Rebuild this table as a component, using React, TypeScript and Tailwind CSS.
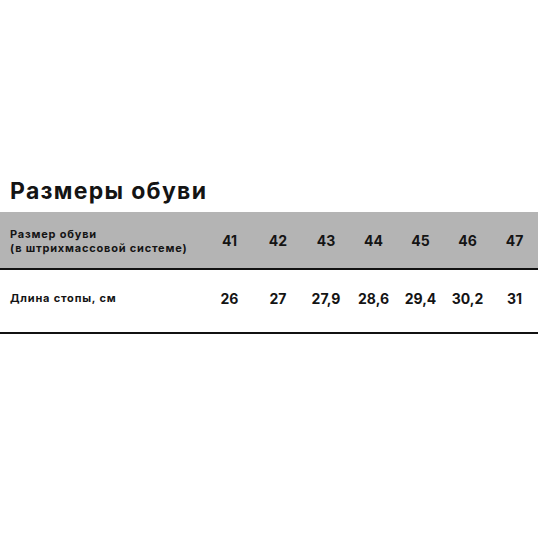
import React from "react";

const sizes = ["41", "42", "43", "44", "45", "46", "47"];
const lengths = ["26", "27", "27,9", "28,6", "29,4", "30,2", "31"];

const grid =
  "grid grid-cols-[205px_49px_48px_48px_47px_47px_47px_47px] items-center";

export default function App() {
  return (
    <div
      className="w-[538px] h-[538px] bg-white text-[#141414] pt-[177px]"
      style={{ fontFamily: "Inter, 'Noto Sans', sans-serif" }}
    >
      <h1 className="pl-[10px] text-[23px] leading-[28px] font-bold tracking-[1.3px]">
        Размеры обуви
      </h1>

      <div className="mt-[7px]">
        <div className={`${grid} h-[58px] bg-[#b4b4b4] border-b-2 border-[#111]`}>
          <div className="pl-[10px] pt-[2px] text-[11px] leading-[14px] font-bold tracking-[0.8px]">
            <div>Размер обуви</div>
            <div>(в штрихмассовой системе)</div>
          </div>
          {sizes.map((s) => (
            <div key={s} className="text-center text-[14px] font-bold">
              {s}
            </div>
          ))}
        </div>

        <div className={`${grid} h-[64px] pb-[6px] border-b-2 border-[#111]`}>
          <div className="pl-[10px] text-[11px] font-bold tracking-[0.8px]">
            Длина стопы, см
          </div>
          {lengths.map((l) => (
            <div key={l} className="text-center text-[14px] font-bold">
              {l}
            </div>
          ))}
        </div>
      </div>
    </div>
  );
}
